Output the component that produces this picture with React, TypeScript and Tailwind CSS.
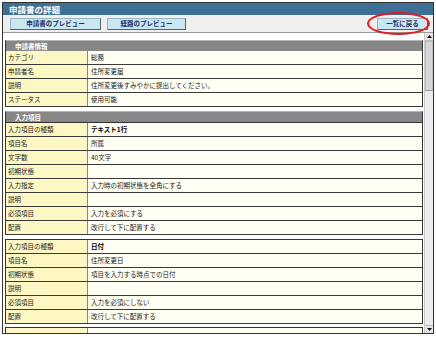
type Row = { label: string; value: string; bold?: boolean };

const basicInfo: Row[] = [
  { label: "カテゴリ", value: "総務" },
  { label: "申請者名", value: "住所変更届" },
  { label: "説明", value: "住所変更後すみやかに提出してください。" },
  { label: "ステータス", value: "使用可能" },
];

const textItem: Row[] = [
  { label: "入力項目の種類", value: "テキスト1行", bold: true },
  { label: "項目名", value: "所属" },
  { label: "文字数", value: "40文字" },
  { label: "初期状態", value: "" },
  { label: "入力指定", value: "入力時の初期状態を全角にする" },
  { label: "説明", value: "" },
  { label: "必須項目", value: "入力を必須にする" },
  { label: "配置", value: "改行して下に配置する" },
];

const dateItem: Row[] = [
  { label: "入力項目の種類", value: "日付", bold: true },
  { label: "項目名", value: "住所変更日" },
  { label: "初期状態", value: "項目を入力する時点での日付" },
  { label: "説明", value: "" },
  { label: "必須項目", value: "入力を必須にしない" },
  { label: "配置", value: "改行して下に配置する" },
];

// next block, scrolled out of view below the fold
const nextItem: Row[] = [{ label: "", value: "" }];

function DetailRow({ row }: { row: Row }) {
  return (
    <div className="flex h-[14px] border-b border-[#3a3a3a]">
      <div className="w-[82px] shrink-0 flex items-center pl-[2px] bg-[#fdf7c3] border-r border-[#8a8a7a] text-[#222]">
        {row.label}
      </div>
      <div
        className={`flex-1 flex items-center pl-[3px] bg-[#fffff3] text-[#222] ${
          row.bold ? "font-bold text-black" : ""
        }`}
      >
        {row.value}
      </div>
    </div>
  );
}

function SectionHeader({ title }: { title: string }) {
  return (
    <div className="h-[11px] flex items-center pl-[9px] bg-[#878787] border-t border-[#b5b5b5] border-l border-r border-l-[#333] border-r-[#333] text-white font-bold">
      {title}
    </div>
  );
}

function Block({ rows }: { rows: Row[] }) {
  return (
    <div className="border-t border-l border-r border-[#333]">
      {rows.map((row, i) => (
        <DetailRow key={i} row={row} />
      ))}
    </div>
  );
}

function ToolButton({ label, className }: { label: string; className: string }) {
  return (
    <button
      className={`h-[12px] flex items-center justify-center bg-[#c9e7f1] border border-[#9ab4c2] border-b-[#4d6676] border-r-[#4d6676] text-[#1d2f6a] font-bold text-[6.5px] leading-none ${className}`}
    >
      {label}
    </button>
  );
}

export default function App() {
  return (
    <div className="w-[436px] h-[337px] bg-white pt-[2px] pl-[2px] font-['Noto_Sans_CJK_JP','Noto_Sans',sans-serif] text-[6.5px] leading-none relative overflow-hidden">
      <div className="w-[432px] h-[332px] border border-[#333] flex flex-col bg-white">
        {/* Title */}
        <div className="h-[12px] shrink-0 bg-[#3e7096] flex items-center pl-[6px] text-white font-bold text-[8.5px]">
          申請書の詳細
        </div>

        {/* Toolbar */}
        <div className="h-[18px] shrink-0 bg-[#efefef] border-b border-[#9a9a9a] flex items-center pl-[7px] pr-[5px]">
          <ToolButton label="申請書のプレビュー" className="w-[91px]" />
          <ToolButton label="経路のプレビュー" className="w-[79px] ml-[6px]" />
          <ToolButton label="一覧に戻る" className="w-[51px] ml-auto" />
        </div>

        {/* Content */}
        <div className="flex-1 flex overflow-hidden">
          <div className="flex-1 overflow-hidden pt-[7px] pl-[2px] pr-[1px]">
            <SectionHeader title="申請書情報" />
            <div className="border-l border-r border-[#333]">
              {basicInfo.map((row, i) => (
                <DetailRow key={i} row={row} />
              ))}
            </div>

            <div className="mt-[4px]">
              <SectionHeader title="入力項目" />
              <Block rows={textItem} />
            </div>

            <div className="mt-[4px]">
              <Block rows={dateItem} />
            </div>

            <div className="mt-[3px]">
              <Block rows={nextItem} />
            </div>
          </div>

          {/* Scrollbar */}
          <div className="w-[9px] shrink-0 flex flex-col bg-[#ececec] border-l border-[#c8c8c8]">
            <div className="h-[8px] flex items-center justify-center bg-[#e4e4e4] border-b border-[#bbb]">
              <svg width="5" height="3" viewBox="0 0 5 3">
                <path d="M2.5 0L5 3H0z" fill="#111" />
              </svg>
            </div>
            <div className="h-[50px] bg-[#d6d6d6] border border-[#bdbdbd] border-b-[#999]" />
            <div className="flex-1" />
            <div className="h-[8px] flex items-center justify-center bg-[#e4e4e4] border-t border-[#bbb]">
              <svg width="5" height="3" viewBox="0 0 5 3">
                <path d="M0 0H5L2.5 3z" fill="#111" />
              </svg>
            </div>
          </div>
        </div>
      </div>

      {/* Red highlight around the back button */}
      <div className="absolute left-[367px] top-[12px] w-[63px] h-[23px] rounded-[50%] border-2 border-[#e01a1f]" />
    </div>
  );
}
